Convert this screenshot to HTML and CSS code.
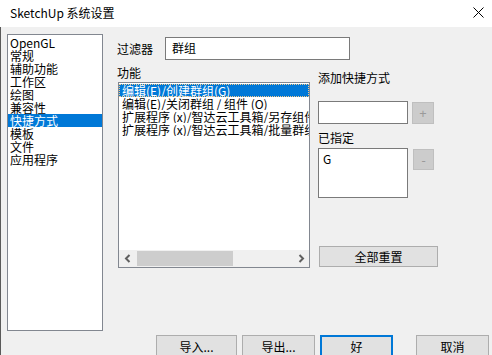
FILE: index.html
```html
<!DOCTYPE html>
<html>
<head>
  <meta charset="UTF-8">
  <title>SketchUp 系统设置</title>
  <link rel="stylesheet" href="styles.css">
</head>
<body>
  <div class="window">
    <div class="titlebar">
      <span class="title">SketchUp 系统设置</span>
      <svg class="close" width="11" height="11" viewBox="0 0 11 11">
        <path d="M0.5 0.5 L10.5 10.5 M10.5 0.5 L0.5 10.5" stroke="#000" stroke-width="1" fill="none"/>
      </svg>
    </div>

    <div class="content">
      <div class="main">
        <ul class="nav">
          <li>OpenGL</li>
          <li>常规</li>
          <li>辅助功能</li>
          <li>工作区</li>
          <li>绘图</li>
          <li>兼容性</li>
          <li class="active">快捷方式</li>
          <li>模板</li>
          <li>文件</li>
          <li>应用程序</li>
        </ul>

        <div class="panel">
          <div class="filter-row">
            <span class="filter-label">过滤器</span>
            <div class="field filter-field">群组</div>
          </div>

          <div class="columns">
            <div class="func-col">
              <div class="label">功能</div>
              <div class="func-list">
                <ul class="items">
                  <li class="selected">编辑(E)/创建群组(G)</li>
                  <li>编辑(E)/关闭群组 / 组件 (O)</li>
                  <li>扩展程序 (x)/智达云工具箱/另存组件</li>
                  <li>扩展程序 (x)/智达云工具箱/批量群组</li>
                </ul>
                <div class="hscroll">
                  <span class="arrow">
                    <svg width="8" height="9" viewBox="0 0 8 9"><path d="M5.5 1 L2 4.5 L5.5 8" stroke="#606060" stroke-width="2" fill="none"/></svg>
                  </span>
                  <span class="thumb"></span>
                  <span class="track"></span>
                  <span class="arrow">
                    <svg width="8" height="9" viewBox="0 0 8 9"><path d="M2.5 1 L6 4.5 L2.5 8" stroke="#606060" stroke-width="2" fill="none"/></svg>
                  </span>
                </div>
              </div>
            </div>

            <div class="side-col">
              <div class="label add-label">添加快捷方式</div>
              <div class="key-row">
                <div class="field key-field"></div>
                <button class="small-btn plus" disabled>+</button>
              </div>
              <div class="label assigned-label">已指定</div>
              <div class="key-row">
                <div class="field assigned">G</div>
                <button class="small-btn minus" disabled>-</button>
              </div>
              <button class="btn reset">全部重置</button>
            </div>
          </div>
        </div>
      </div>

      <div class="footer">
        <button class="btn import">导入...</button>
        <button class="btn export">导出...</button>
        <button class="btn ok">好</button>
        <button class="btn cancel">取消</button>
      </div>
    </div>
  </div>
</body>
</html>
```

FILE: styles.css
```css
/* dialog look, classic windows style */
html, body {
  margin: 0;
  padding: 0;
  overflow: hidden;
}

body {
  width: 492px;
  height: 355px;
  background: #f0f0f0;
  font-family: "Noto Sans CJK SC", "Noto Sans", sans-serif;
  font-size: 12px;
  color: #000;
}

.window {
  width: 492px;
  height: 355px;
}

.titlebar {
  height: 27px;
  background: #fff;
  display: flex;
  align-items: center;
  padding: 0 8px 0 10px;
  box-sizing: border-box;
}

.title {
  flex: 1;
  line-height: 14px;
  margin-top: -1px;
}

.close {
  margin-right: 0;
  margin-top: -2px;
}

.content {
  border-left: 1px solid #5a5a5a;
  height: 328px;
}

.main {
  display: flex;
}

/* left category list */
.nav {
  list-style: none;
  margin: 7px 0 0 6px;
  padding: 1px 0 0 0;
  width: 96px;
  height: 297px;
  box-sizing: border-box;
  border: 1px solid #828790;
  background: #fff;
}

.nav li {
  height: 13px;
  line-height: 13px;
  padding-left: 2px;
  white-space: nowrap;
}

.nav li.active {
  background: #0078d7;
  color: #fff;
}

.panel {
  margin-left: 14px;
}

.filter-row {
  display: flex;
  align-items: center;
  margin-top: 10px;
}

.filter-label {
  width: 48px;
}

.field {
  background: #fff;
  border: 1px solid #7a7a7a;
  box-sizing: border-box;
}

.filter-field {
  width: 185px;
  height: 23px;
  line-height: 20px;
  padding-left: 6px;
}

.columns {
  display: flex;
}

.label {
  height: 13px;
  line-height: 13px;
}

.func-col .label {
  margin-top: 6px;
}

.func-list {
  margin: 3px 0 0 1px;
  width: 192px;
  height: 186px;
  box-sizing: border-box;
  border: 1px solid #828790;
  background: #fff;
  display: flex;
  flex-direction: column;
}

.items {
  flex: 1;
  list-style: none;
  margin: 0;
  padding: 1px 0 0 0;
  overflow: hidden;
}

.items li {
  height: 13px;
  line-height: 13px;
  padding-left: 3px;
  white-space: nowrap;
  overflow: hidden;
}

.items li.selected {
  background: #0078d7;
  color: #fff;
  outline: 1px dotted #f3c98b;
  outline-offset: -1px;
}

.hscroll {
  height: 17px;
  background: #f0f0f0;
  display: flex;
  align-items: center;
}

.arrow {
  width: 17px;
  height: 15px;
  display: flex;
  align-items: center;
  justify-content: center;
}

.thumb {
  width: 96px;
  height: 15px;
  margin-left: 1px;
  background: #cdcdcd;
}

.track {
  flex: 1;
}

/* right column */
.side-col {
  margin-left: 8px;
  display: flex;
  flex-direction: column;
  align-items: flex-start;
}

.add-label {
  margin-top: 11px;
}

.key-row {
  display: flex;
  align-items: flex-start;
}

.key-row:first-of-type {
  margin-top: 17px;
}

.add-label + .key-row {
  margin-top: 17px;
}

.key-field {
  width: 90px;
  height: 23px;
}

.assigned-label {
  margin-top: 7px;
}

.assigned-label + .key-row {
  margin-top: 4px;
}

.assigned {
  width: 90px;
  height: 50px;
  line-height: 14px;
  padding: 3px 0 0 4px;
}

.small-btn {
  font-family: "Noto Sans", sans-serif;
  font-size: 13px;
  color: #9a9a9a;
  background: #cccccc;
  border: 1px solid #bfbfbf;
  padding: 0;
  margin-top: 1px;
  line-height: 18px;
}

.plus {
  width: 22px;
  height: 22px;
  margin-left: 4px;
}

.minus {
  width: 21px;
  height: 21px;
  margin-left: 5px;
}

.btn {
  font-family: "Noto Sans CJK SC", "Noto Sans", sans-serif;
  font-size: 12px;
  color: #000;
  background: #e1e1e1;
  border: 1px solid #adadad;
  padding: 0;
  box-sizing: border-box;
}

.reset {
  width: 119px;
  height: 21px;
  margin: 48px 0 0 1px;
  line-height: 18px;
}

/* bottom buttons */
.footer {
  display: flex;
  margin-top: 4px;
  padding-left: 155px;
}

.footer .btn {
  height: 23px;
  line-height: 20px;
}

.import {
  width: 81px;
}

.export {
  width: 73px;
  margin-left: 5px;
}

.ok {
  width: 73px;
  margin-left: 5px;
  border: 2px solid #0078d7;
}

.cancel {
  width: 73px;
  margin-left: 23px;
}
```
